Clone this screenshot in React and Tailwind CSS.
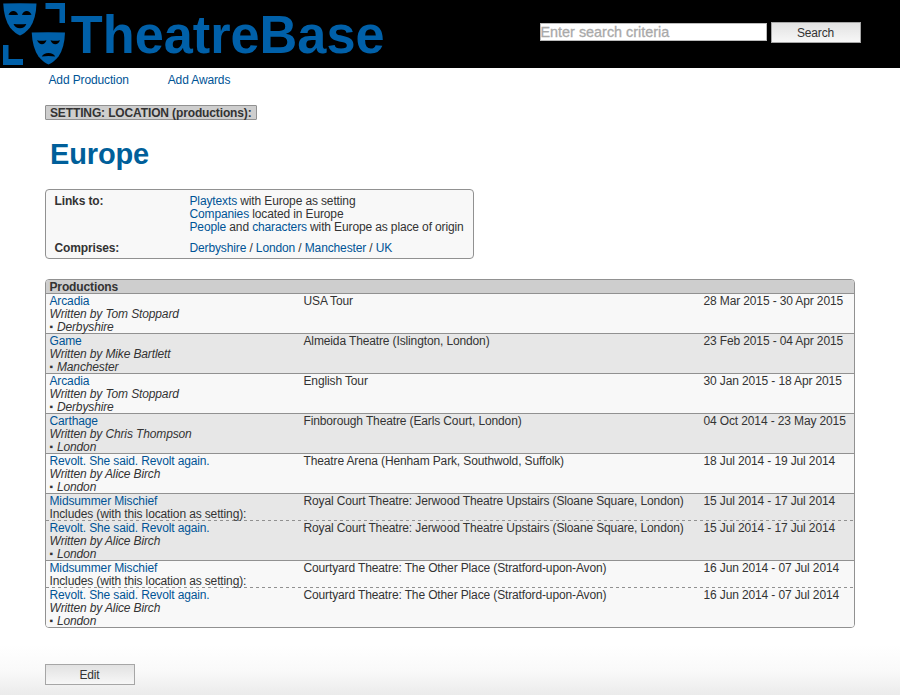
import React from "react";

const A = ({ children }) => <a className="text-[#005496]">{children}</a>;

const GROUPS = [
  [{ title: "Arcadia", by: "Tom Stoppard", place: "Derbyshire", venue: "USA Tour", dates: "28 Mar 2015 - 30 Apr 2015" }],
  [{ title: "Game", by: "Mike Bartlett", place: "Manchester", venue: "Almeida Theatre (Islington, London)", dates: "23 Feb 2015 - 04 Apr 2015" }],
  [{ title: "Arcadia", by: "Tom Stoppard", place: "Derbyshire", venue: "English Tour", dates: "30 Jan 2015 - 18 Apr 2015" }],
  [{ title: "Carthage", by: "Chris Thompson", place: "London", venue: "Finborough Theatre (Earls Court, London)", dates: "04 Oct 2014 - 23 May 2015" }],
  [{ title: "Revolt. She said. Revolt again.", by: "Alice Birch", place: "London", venue: "Theatre Arena (Henham Park, Southwold, Suffolk)", dates: "18 Jul 2014 - 19 Jul 2014" }],
  [
    { title: "Midsummer Mischief", venue: "Royal Court Theatre: Jerwood Theatre Upstairs (Sloane Square, London)", dates: "15 Jul 2014 - 17 Jul 2014" },
    { title: "Revolt. She said. Revolt again.", by: "Alice Birch", place: "London", venue: "Royal Court Theatre: Jerwood Theatre Upstairs (Sloane Square, London)", dates: "15 Jul 2014 - 17 Jul 2014" },
  ],
  [
    { title: "Midsummer Mischief", venue: "Courtyard Theatre: The Other Place (Stratford-upon-Avon)", dates: "16 Jun 2014 - 07 Jul 2014" },
    { title: "Revolt. She said. Revolt again.", by: "Alice Birch", place: "London", venue: "Courtyard Theatre: The Other Place (Stratford-upon-Avon)", dates: "16 Jun 2014 - 07 Jul 2014" },
  ],
];

function Logo() {
  return (
    <svg width="390" height="68" viewBox="0 0 390 68" className="block overflow-visible tracking-normal">
      <g fill="#0060a9">
        <path d="M45.500 3H65V23H59.500V9H45.500Z" />
        <path d="M3 45H8.500V59H23V65H3Z" />
        <path d="M3.200 3.500Q19.500 2.800 36.500 3.500Q36 19 30 27.500Q25 33.500 20 35.500Q15 33.500 10 27.500Q4 19 3.200 3.500Z" />
        <path d="M31.700 32.500Q48 31.800 65 32.500Q64.500 48 58.500 56.500Q53.500 62.500 48.500 64.500Q43.500 62.500 38.500 56.500Q32.500 48 31.700 32.500Z" />
      </g>
      <g fill="#000">
        <path d="M8.500 14.800Q10 11 13.300 11T18.200 14.800Q13.500 15.400 8.500 14.800ZM21.800 14.800Q23.500 11 26.700 11T31.500 14.800Q26.500 15.400 21.800 14.800Z" />
        <path d="M13.500 24Q20 24.600 26.300 24Q24.500 28.300 20 28.300T13.500 24Z" />
        <path d="M37 40.300Q41.500 41.300 46.500 40.300Q45 44.200 42 44.200T37 40.300ZM50.500 40.300Q55.500 41.300 60 40.300Q58.500 44.200 55.300 44.200T50.500 40.300Z" />
        <path d="M41.800 56.500Q43.500 53 48.500 53T55.200 56.500Q48.500 55.500 41.800 56.500Z" />
      </g>
      <text x="70.800" y="53.300" fill="#0060a9" fontSize="54.500" fontWeight="700" textLength="313.800" lengthAdjust="spacingAndGlyphs">TheatreBase</text>
    </svg>
  );
}

const Button = ({ children }) => (
  <button className="h-[21px] w-[90px] border border-[#a6a6a6] bg-gradient-to-b from-[#e2e2e2] to-[#f7f7f7] pr-px text-center leading-[20px] tracking-[-0.130px]">{children}</button>
);

const DashedRule = () => (
  <div className="h-px bg-[repeating-linear-gradient(to_right,#919191_0_3px,transparent_3px_6px)]" />
);

export default function App() {
  return (
    <div className="h-[695px] overflow-hidden bg-white bg-[linear-gradient(to_bottom,#fff_645px,#f9f9f9_672px,#ebebeb_695px)] font-['Liberation_Sans',Arial,sans-serif] text-[12px] leading-[13px] tracking-[-0.130px] text-[#333]">
      <header className="flex h-[68px] justify-between bg-black pr-[39px]">
        <Logo />
        <div className="flex gap-[4px] pt-[22px]">
          <input placeholder="Enter search criteria" className="mt-px h-[18px] w-[227px] border border-[#bbb] bg-white p-0 -indent-[0.500px] text-[14.400px] leading-4 tracking-normal placeholder:text-[#a9a9a9] placeholder:opacity-100 placeholder:[-webkit-text-stroke:0.300px_#a9a9a9]" />
          <Button>Search</Button>
        </div>
      </header>
      <nav className="flex gap-[39px] pl-[48.500px] pt-[6px]">
        <A>Add Production</A>
        <A>Add Awards</A>
      </nav>
      <main className="pl-[45px] pt-[18px]">
        <div className="h-[15px] w-[212px] whitespace-nowrap rounded-[1px] border border-[#919191] bg-[#cecece] pl-[4px] font-bold leading-[14px]">SETTING: LOCATION (productions):</div>
        <h1 className="mt-[17px] h-[34px] pl-[5px] text-[29px] font-bold leading-[34px] text-[#005f9a]">Europe</h1>
        <dl className="mt-[18px] grid h-[70px] w-[429px] grid-cols-[135px_1fr] content-start gap-y-[8px] whitespace-nowrap rounded-[4px] border border-[#919191] bg-[#f8f8f8] pl-[8.500px] pt-[5px]">
          <dt className="font-bold">Links to:</dt>
          <dd>
            <div><A>Playtexts</A> with Europe as setting</div>
            <div><A>Companies</A> located in Europe</div>
            <div><A>People</A> and <A>characters</A> with Europe as place of origin</div>
          </dd>
          <dt className="font-bold">Comprises:</dt>
          <dd><A>Derbyshire</A> / <A>London</A> / <A>Manchester</A> / <A>UK</A></dd>
        </dl>
        <section className="mt-[20px] w-[810px] overflow-hidden whitespace-nowrap rounded-[4px] border border-[#919191]">
          <h2 className="h-[13px] bg-[#cecece] pl-[3.500px] font-bold leading-[14px]">Productions</h2>
          {GROUPS.map((group, g) => (
            <div key={g} className="border-t border-[#919191] even:bg-[#f8f8f8] odd:bg-[#e7e7e7]">
              {group.map((p, i) => (
                <React.Fragment key={i}>
                  {i > 0 && <DashedRule />}
                  <div className={p.by ? "grid h-[39px] grid-cols-[254px_400px_1fr] pl-[3.500px] pt-px" : "grid h-[26px] grid-cols-[254px_400px_1fr] pl-[3.500px] pt-px"}>
                    <div>
                      <div><A>{p.title}</A></div>
                      {p.by ? (
                        <div className="italic">
                          <div>Written by {p.by}</div>
                          <div className="flex gap-[4px]"><span className="text-[10px] leading-[11px] not-italic">▪</span><span>{p.place}</span></div>
                        </div>
                      ) : (
                        <div>Includes (with this location as setting):</div>
                      )}
                    </div>
                    <div>{p.venue}</div>
                    <div>{p.dates}</div>
                  </div>
                </React.Fragment>
              ))}
            </div>
          ))}
        </section>
        <div className="mt-[36px] flex"><Button>Edit</Button></div>
      </main>
    </div>
  );
}
